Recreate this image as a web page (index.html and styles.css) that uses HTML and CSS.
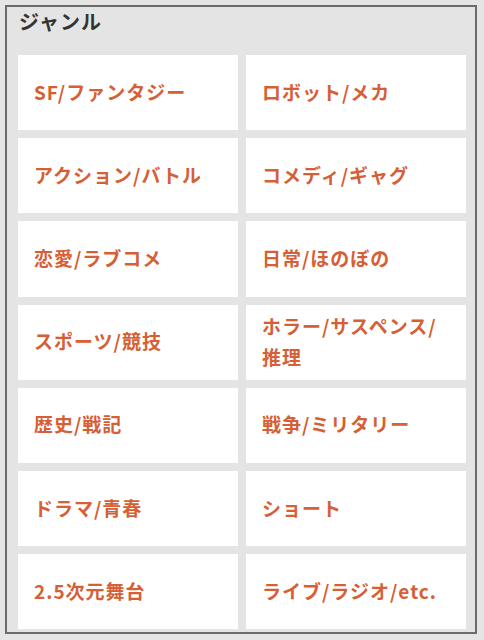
FILE: index.html
```html
<!DOCTYPE html>
<html>
<head>
    <title>ジャンル</title>
    <link rel="stylesheet" href="styles.css">
</head>
<body>
    <div class="panel">
        <h2 class="panel-title">ジャンル</h2>
        <div class="genre-grid">
            <a class="genre" href="#">SF/ファンタジー</a>
            <a class="genre" href="#">ロボット/メカ</a>
            <a class="genre" href="#">アクション/バトル</a>
            <a class="genre" href="#">コメディ/ギャグ</a>
            <a class="genre" href="#">恋愛/ラブコメ</a>
            <a class="genre" href="#">日常/ほのぼの</a>
            <a class="genre" href="#">スポーツ/競技</a>
            <a class="genre" href="#">ホラー/サスペンス/推理</a>
            <a class="genre" href="#">歴史/戦記</a>
            <a class="genre" href="#">戦争/ミリタリー</a>
            <a class="genre" href="#">ドラマ/青春</a>
            <a class="genre" href="#">ショート</a>
            <a class="genre" href="#">2.5次元舞台</a>
            <a class="genre" href="#">ライブ/ラジオ/etc.</a>
        </div>
    </div>
</body>
</html>
```
FILE: styles.css
```css
body {
    margin: 0;
    background: #e5e5e5;
    font-family: "Noto Sans CJK JP", "Noto Sans", sans-serif;
}

/* Framed genre panel */
.panel {
    margin: 5px 7px 6px 5px;
    border: 2px solid #6b6b6b;
    background: #e4e4e4;
    padding: 0 9px 3px 11px;
}

.panel-title {
    margin: 0 0 18px 1px;
    font-size: 20px;
    line-height: 30px;
    font-weight: bold;
    letter-spacing: 1px;
    color: #333333;
}

/* Two-column grid of genre links */
.genre-grid {
    display: grid;
    grid-template-columns: 1fr 1fr;
    grid-auto-rows: 75.2px;
    gap: 8px;
}

.genre {
    display: flex;
    align-items: center;
    padding: 0 16px 3px;
    background: #ffffff;
    color: #d65f35;
    font-size: 19px;
    line-height: 31px;
    font-weight: bold;
    letter-spacing: 1px;
    text-decoration: none;
}
```
